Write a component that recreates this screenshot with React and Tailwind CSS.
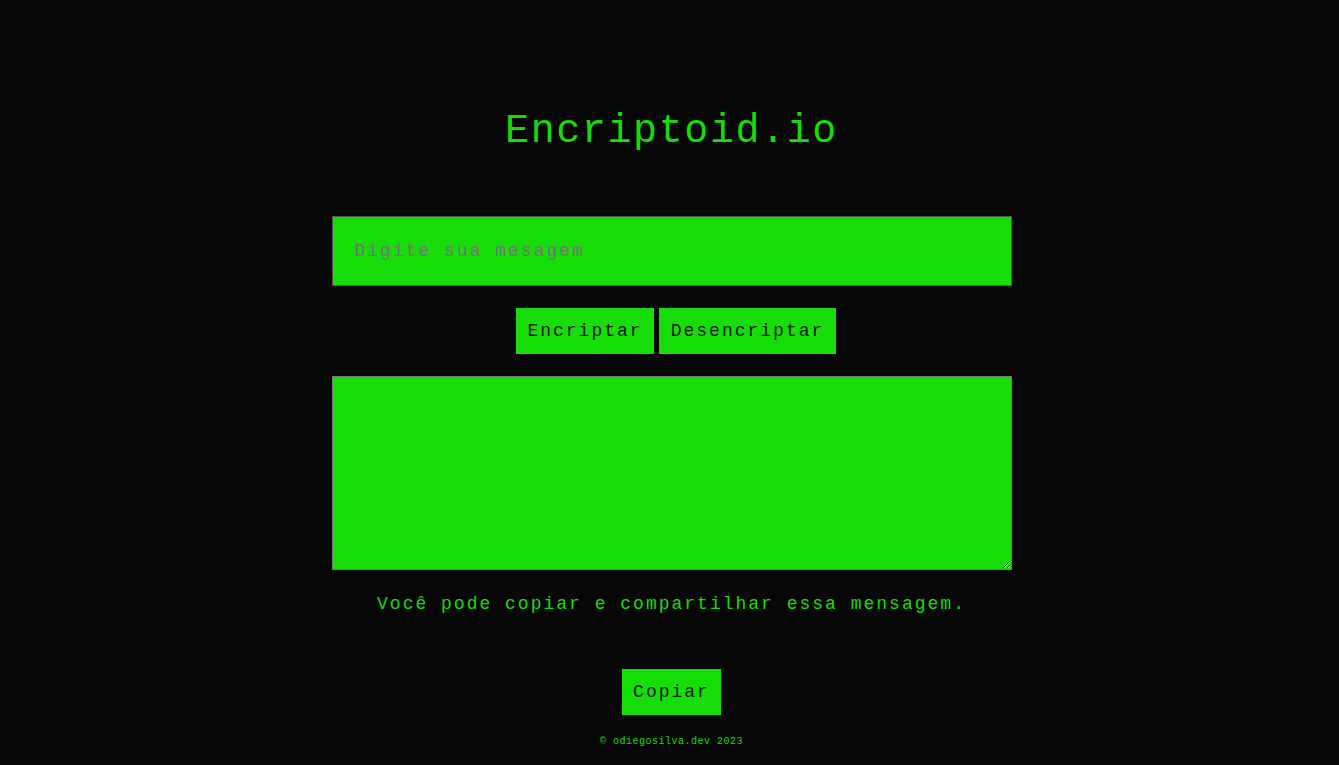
export default function App() {
  const mono = { fontFamily: '"Liberation Mono", "Courier New", monospace' };
  return (
    <div className="min-h-[765px] w-full bg-[#070707] text-[#16dc08]" style={mono}>
      <div className="mx-auto flex w-[680px] translate-x-[2px] flex-col items-center">
        <h1 className="mt-[107px] h-[50px] text-[40px] leading-[50px] tracking-[1.6px] text-[#16dc08]">
          Encriptoid.io
        </h1>
        <input
          className="mt-[59px] h-[70px] w-[680px] border border-[#555] bg-[#16dc08] px-[22px] text-[18px] tracking-[2px] text-black outline-none placeholder:text-[#757575]"
          placeholder="Digite sua mesagem"
        />
        <div className="mt-[22px] flex gap-[5px] pl-[9px]">
          <button className="h-[46px] w-[138px] bg-[#16dc08] text-[18px] tracking-[2px] text-[#1a1a1a]">
            Encriptar
          </button>
          <button className="h-[46px] w-[177px] bg-[#16dc08] text-[18px] tracking-[2px] text-[#1a1a1a]">
            Desencriptar
          </button>
        </div>
        <textarea className="mt-[22px] h-[194px] w-[680px] border border-[#777] bg-[#16dc08] outline-none" />
        <p className="mt-[22px] h-[24px] text-[18px] leading-[24px] tracking-[2px] text-[#16dc08]">
          Você pode copiar e compartilhar essa mensagem.
        </p>
        <button className="mt-[53px] h-[46px] w-[99px] bg-[#16dc08] text-[18px] tracking-[2px] text-[#1a1a1a]">
          Copiar
        </button>
        <footer className="mt-[20px] text-[10px] leading-[14px] tracking-[0.5px] text-[#16dc08]">
          © odiegosilva.dev 2023
        </footer>
      </div>
    </div>
  );
}
